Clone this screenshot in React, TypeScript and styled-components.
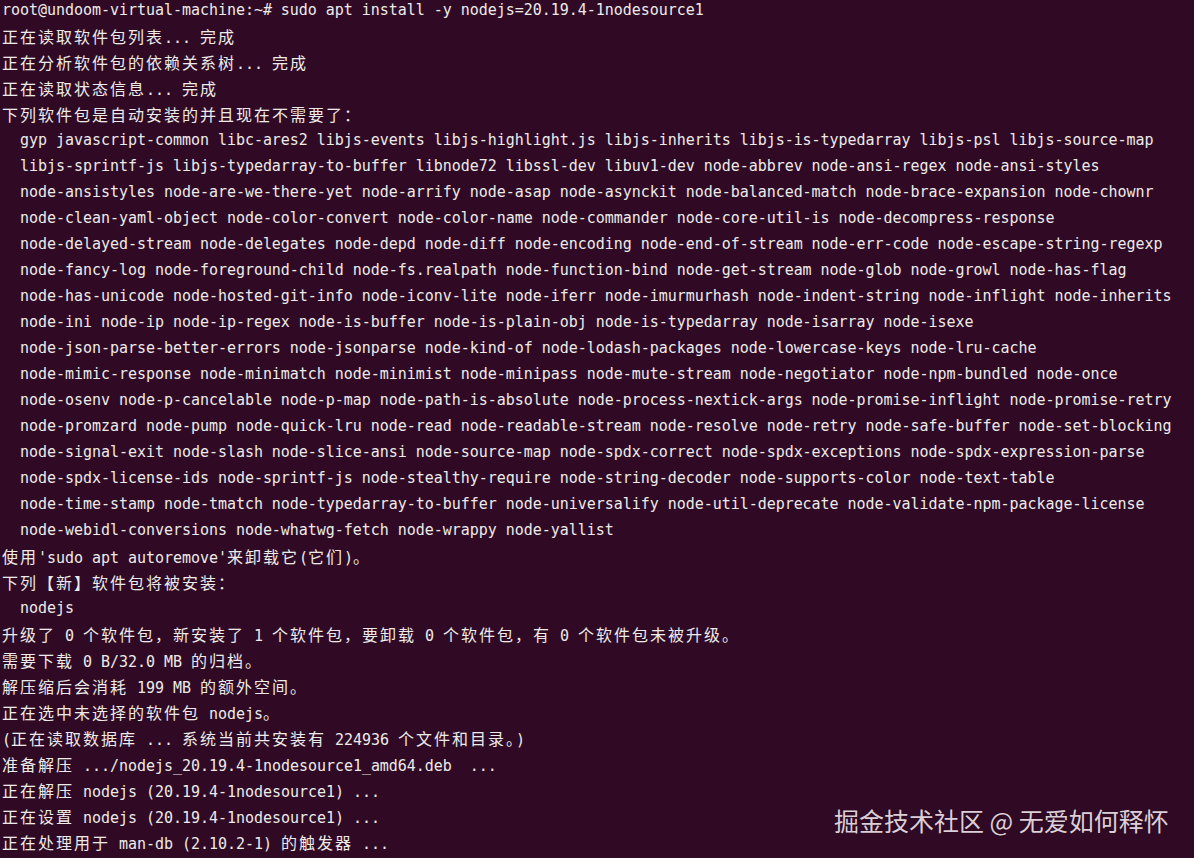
import React from "react";
import styled, { createGlobalStyle } from "styled-components";

const Global = createGlobalStyle`
  html, body {
    margin: 0;
    padding: 0;
    background: #300a24;
  }
`;

const Terminal = styled.div`
  position: relative;
  width: 1194px;
  height: 858px;
  overflow: hidden;
  box-sizing: border-box;
  background: #300a24;
  color: #ecebea;
  font-family: "DejaVu Sans Mono", "Liberation Mono", monospace;
  font-size: 15px;
  letter-spacing: -0.035px;
  padding: 0 0 0 2px;
`;

const Output = styled.div`
  display: flex;
  flex-direction: column;
  margin-top: -3px;
`;

const Line = styled.div`
  height: 26px;
  line-height: 26px;
  white-space: pre;
`;

const Wide = styled.span`
  font-family: "Noto Sans CJK SC", "Noto Sans", sans-serif;
  font-size: 16px;
  letter-spacing: 2px;
`;

const Watermark = styled.div`
  position: absolute;
  left: 834px;
  top: 802px;
  font-family: "Noto Sans CJK SC", "Noto Sans", sans-serif;
  font-size: 25px;
  line-height: 36px;
  color: #dccfd8;
  letter-spacing: 0;
  white-space: pre;
  text-shadow: 0 0 1px rgba(0, 0, 0, 0.4);
`;

const lines: string[] = [
  "root@undoom-virtual-machine:~# sudo apt install -y nodejs=20.19.4-1nodesource1",
  "正在读取软件包列表... 完成",
  "正在分析软件包的依赖关系树... 完成",
  "正在读取状态信息... 完成",
  "下列软件包是自动安装的并且现在不需要了：",
  "  gyp javascript-common libc-ares2 libjs-events libjs-highlight.js libjs-inherits libjs-is-typedarray libjs-psl libjs-source-map",
  "  libjs-sprintf-js libjs-typedarray-to-buffer libnode72 libssl-dev libuv1-dev node-abbrev node-ansi-regex node-ansi-styles",
  "  node-ansistyles node-are-we-there-yet node-arrify node-asap node-asynckit node-balanced-match node-brace-expansion node-chownr",
  "  node-clean-yaml-object node-color-convert node-color-name node-commander node-core-util-is node-decompress-response",
  "  node-delayed-stream node-delegates node-depd node-diff node-encoding node-end-of-stream node-err-code node-escape-string-regexp",
  "  node-fancy-log node-foreground-child node-fs.realpath node-function-bind node-get-stream node-glob node-growl node-has-flag",
  "  node-has-unicode node-hosted-git-info node-iconv-lite node-iferr node-imurmurhash node-indent-string node-inflight node-inherits",
  "  node-ini node-ip node-ip-regex node-is-buffer node-is-plain-obj node-is-typedarray node-isarray node-isexe",
  "  node-json-parse-better-errors node-jsonparse node-kind-of node-lodash-packages node-lowercase-keys node-lru-cache",
  "  node-mimic-response node-minimatch node-minimist node-minipass node-mute-stream node-negotiator node-npm-bundled node-once",
  "  node-osenv node-p-cancelable node-p-map node-path-is-absolute node-process-nextick-args node-promise-inflight node-promise-retry",
  "  node-promzard node-pump node-quick-lru node-read node-readable-stream node-resolve node-retry node-safe-buffer node-set-blocking",
  "  node-signal-exit node-slash node-slice-ansi node-source-map node-spdx-correct node-spdx-exceptions node-spdx-expression-parse",
  "  node-spdx-license-ids node-sprintf-js node-stealthy-require node-string-decoder node-supports-color node-text-table",
  "  node-time-stamp node-tmatch node-typedarray-to-buffer node-universalify node-util-deprecate node-validate-npm-package-license",
  "  node-webidl-conversions node-whatwg-fetch node-wrappy node-yallist",
  "使用'sudo apt autoremove'来卸载它(它们)。",
  "下列【新】软件包将被安装：",
  "  nodejs",
  "升级了 0 个软件包，新安装了 1 个软件包，要卸载 0 个软件包，有 0 个软件包未被升级。",
  "需要下载 0 B/32.0 MB 的归档。",
  "解压缩后会消耗 199 MB 的额外空间。",
  "正在选中未选择的软件包 nodejs。",
  "(正在读取数据库 ... 系统当前共安装有 224936 个文件和目录。)",
  "准备解压 .../nodejs_20.19.4-1nodesource1_amd64.deb  ...",
  "正在解压 nodejs (20.19.4-1nodesource1) ...",
  "正在设置 nodejs (20.19.4-1nodesource1) ...",
  "正在处理用于 man-db (2.10.2-1) 的触发器 ...",
];

const WIDE_RE = /([\u2E80-\u9FFF\u3000-\u303F\uFF00-\uFFEF]+)/;

function renderLine(text: string) {
  return text.split(WIDE_RE).map((part, i) =>
    part === "" ? null : i % 2 === 1 ? <Wide key={i}>{part}</Wide> : <React.Fragment key={i}>{part}</React.Fragment>
  );
}

export default function App() {
  return (
    <>
      <Global />
      <Terminal>
        <Output>
          {lines.map((l, i) => (
            <Line key={i}>{renderLine(l)}</Line>
          ))}
        </Output>
        <Watermark>掘金技术社区 @ 无爱如何释怀</Watermark>
      </Terminal>
    </>
  );
}
